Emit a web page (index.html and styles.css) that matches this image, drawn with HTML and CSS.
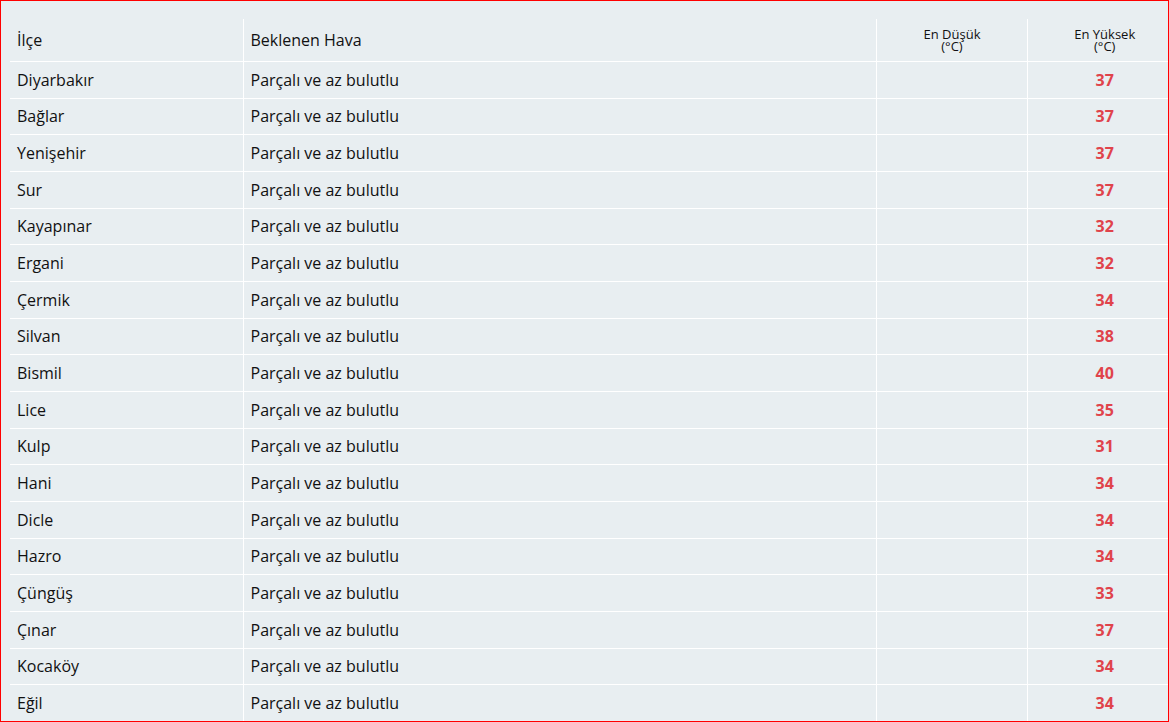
FILE: index.html
```html
<!DOCTYPE html>
<html lang="tr">
<head>
<meta charset="utf-8">
<title>İlçe Hava Durumu</title>
<link rel="stylesheet" href="styles.css">
</head>
<body>
<div class="frame">
  <table class="forecast">
    <colgroup>
      <col class="c-district">
      <col class="c-weather">
      <col class="c-min">
      <col class="c-max">
    </colgroup>
    <thead>
      <tr>
        <th class="th-left">İlçe</th>
        <th class="th-left">Beklenen Hava</th>
        <th class="th-small">En Düşük<br>(°C)</th>
        <th class="th-small">En Yüksek<br>(°C)</th>
      </tr>
    </thead>
    <tbody>
      <tr><td>Diyarbakır</td><td>Parçalı ve az bulutlu</td><td></td><td class="max">37</td></tr>
      <tr><td>Bağlar</td><td>Parçalı ve az bulutlu</td><td></td><td class="max">37</td></tr>
      <tr><td>Yenişehir</td><td>Parçalı ve az bulutlu</td><td></td><td class="max">37</td></tr>
      <tr><td>Sur</td><td>Parçalı ve az bulutlu</td><td></td><td class="max">37</td></tr>
      <tr><td>Kayapınar</td><td>Parçalı ve az bulutlu</td><td></td><td class="max">32</td></tr>
      <tr><td>Ergani</td><td>Parçalı ve az bulutlu</td><td></td><td class="max">32</td></tr>
      <tr><td>Çermik</td><td>Parçalı ve az bulutlu</td><td></td><td class="max">34</td></tr>
      <tr><td>Silvan</td><td>Parçalı ve az bulutlu</td><td></td><td class="max">38</td></tr>
      <tr><td>Bismil</td><td>Parçalı ve az bulutlu</td><td></td><td class="max">40</td></tr>
      <tr><td>Lice</td><td>Parçalı ve az bulutlu</td><td></td><td class="max">35</td></tr>
      <tr><td>Kulp</td><td>Parçalı ve az bulutlu</td><td></td><td class="max">31</td></tr>
      <tr><td>Hani</td><td>Parçalı ve az bulutlu</td><td></td><td class="max">34</td></tr>
      <tr><td>Dicle</td><td>Parçalı ve az bulutlu</td><td></td><td class="max">34</td></tr>
      <tr><td>Hazro</td><td>Parçalı ve az bulutlu</td><td></td><td class="max">34</td></tr>
      <tr><td>Çüngüş</td><td>Parçalı ve az bulutlu</td><td></td><td class="max">33</td></tr>
      <tr><td>Çınar</td><td>Parçalı ve az bulutlu</td><td></td><td class="max">37</td></tr>
      <tr><td>Kocaköy</td><td>Parçalı ve az bulutlu</td><td></td><td class="max">34</td></tr>
      <tr><td>Eğil</td><td>Parçalı ve az bulutlu</td><td></td><td class="max">34</td></tr>
    </tbody>
  </table>
</div>
</body>
</html>
```
FILE: styles.css
```css
html, body {
  margin: 0;
  padding: 0;
}

body {
  font-family: "Open Sans", "Liberation Sans", sans-serif;
  color: #111111;
  background: #e8eef1;
}

.frame {
  box-sizing: border-box;
  width: 1169px;
  height: 722px;
  border: 1px solid #ff0000;
  overflow: hidden;
  background: #e8eef1;
  padding: 18px 0 0 9px;
}

.forecast {
  border-collapse: collapse;
  table-layout: fixed;
  width: 1171px;
  font-size: 16px;
}

.c-district { width: 233px; }
.c-weather { width: 633px; }
.c-min { width: 151px; }
.c-max { width: 154px; }

.forecast th,
.forecast td {
  border-left: 1px solid #ffffff;
  border-bottom: 1px solid #ffffff;
  padding: 0 6px 0 7px;
  vertical-align: middle;
}

.forecast th:first-child,
.forecast td:first-child {
  border-left: none;
}

.forecast th {
  height: 42px;
  font-weight: normal;
  line-height: 22px;
}

.forecast .th-left {
  text-align: left;
}

.forecast .th-small {
  text-align: center;
  font-size: 13px;
  line-height: 12.5px;
  padding-top: 0;
}

.forecast td {
  height: 35.667px;
  line-height: 22px;
}

.forecast td.max {
  text-align: center;
  font-weight: bold;
  color: #e0434b;
}
```
